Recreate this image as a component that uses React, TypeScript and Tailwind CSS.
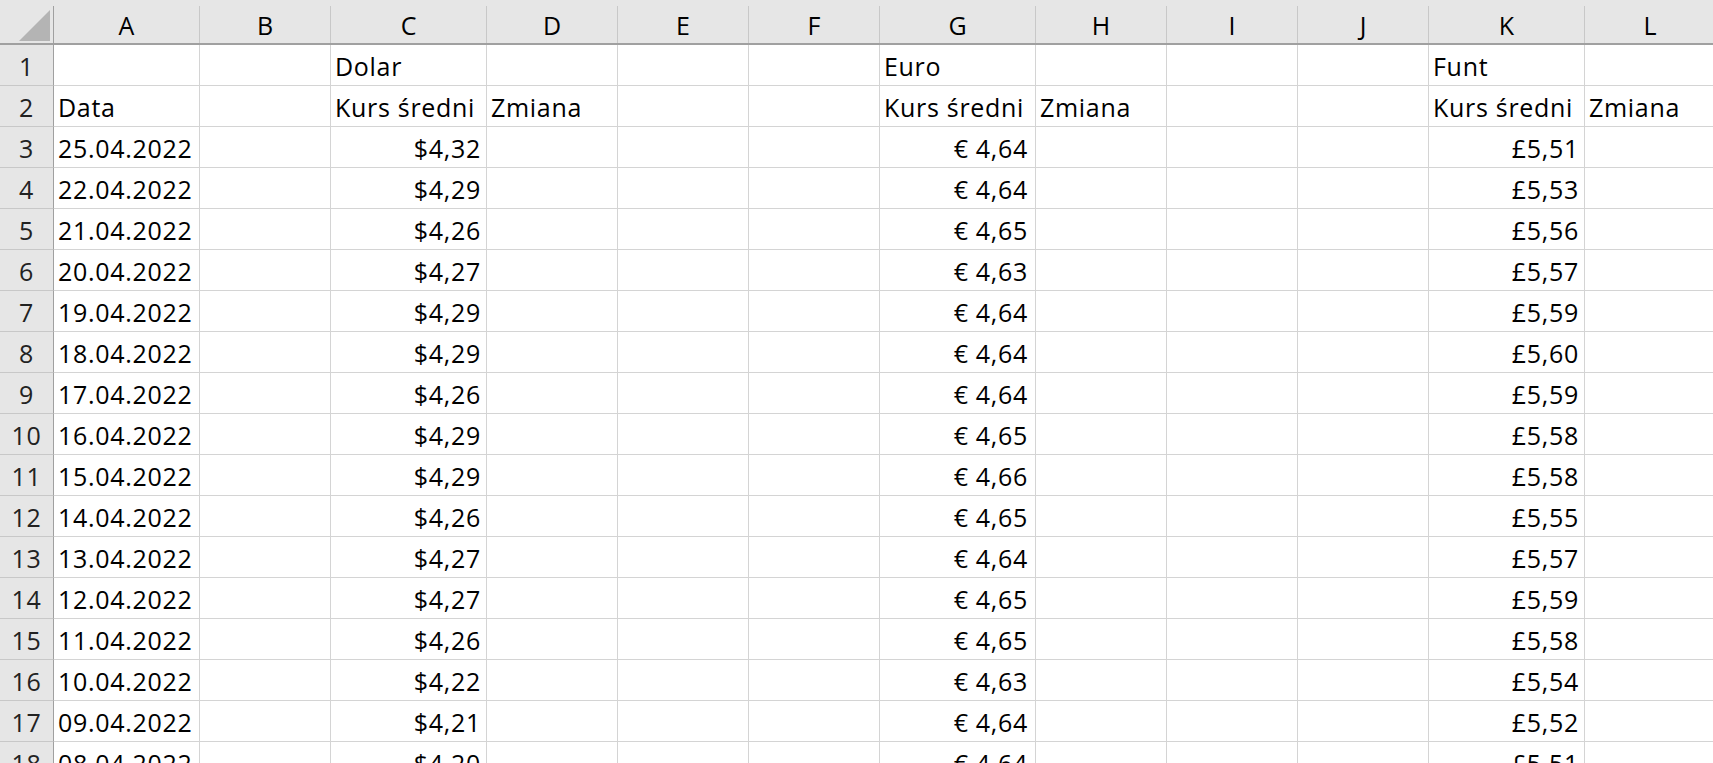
const cols = ["A", "B", "C", "D", "E", "F", "G", "H", "I", "J", "K", "L"];

const widths = [
  "w-[146px]",
  "w-[131px]",
  "w-[156px]",
  "w-[131px]",
  "w-[131px]",
  "w-[131px]",
  "w-[156px]",
  "w-[131px]",
  "w-[131px]",
  "w-[131px]",
  "w-[156px]",
  "w-[131px]",
];

type Cell = { text: string; right?: boolean; pr?: string };

const rates: [string, string, string, string][] = [
  ["25.04.2022", "$4,32", "€ 4,64", "£5,51"],
  ["22.04.2022", "$4,29", "€ 4,64", "£5,53"],
  ["21.04.2022", "$4,26", "€ 4,65", "£5,56"],
  ["20.04.2022", "$4,27", "€ 4,63", "£5,57"],
  ["19.04.2022", "$4,29", "€ 4,64", "£5,59"],
  ["18.04.2022", "$4,29", "€ 4,64", "£5,60"],
  ["17.04.2022", "$4,26", "€ 4,64", "£5,59"],
  ["16.04.2022", "$4,29", "€ 4,65", "£5,58"],
  ["15.04.2022", "$4,29", "€ 4,66", "£5,58"],
  ["14.04.2022", "$4,26", "€ 4,65", "£5,55"],
  ["13.04.2022", "$4,27", "€ 4,64", "£5,57"],
  ["12.04.2022", "$4,27", "€ 4,65", "£5,59"],
  ["11.04.2022", "$4,26", "€ 4,65", "£5,58"],
  ["10.04.2022", "$4,22", "€ 4,63", "£5,54"],
  ["09.04.2022", "$4,21", "€ 4,64", "£5,52"],
  ["08.04.2022", "$4,20", "€ 4,64", "£5,51"],
];

function buildRows(): Cell[][] {
  const empty = (): Cell[] => cols.map(() => ({ text: "" }));
  const r1 = empty();
  r1[2] = { text: "Dolar" };
  r1[6] = { text: "Euro" };
  r1[10] = { text: "Funt" };
  const r2 = empty();
  r2[0] = { text: "Data" };
  r2[2] = { text: "Kurs średni" };
  r2[3] = { text: "Zmiana" };
  r2[6] = { text: "Kurs średni" };
  r2[7] = { text: "Zmiana" };
  r2[10] = { text: "Kurs średni" };
  r2[11] = { text: "Zmiana" };
  const rest = rates.map(([d, usd, eur, gbp]) => {
    const r = empty();
    r[0] = { text: d };
    r[2] = { text: usd, right: true };
    r[6] = { text: eur, right: true, pr: "pr-[7px]" };
    r[10] = { text: gbp, right: true };
    return r;
  });
  return [r1, r2, ...rest];
}

function HeaderCell({ label, w }: { label: string; w: string }) {
  return (
    <div className={`flex shrink-0 ${w} h-[43px]`}>
      <div className="flex flex-1 items-end justify-center pb-[3px] leading-[30px]">
        {label}
      </div>
      <div className="w-px h-[37px] self-end bg-[#c8c8c8]" />
    </div>
  );
}

function DataCell({ cell, w }: { cell: Cell; w: string }) {
  return (
    <div
      className={`flex shrink-0 ${w} h-[41px] border-r border-b border-[#d4d4d4] items-end pb-[4px] leading-[30px] whitespace-nowrap tracking-[0.7px] ${
        cell.right ? `justify-end ${cell.pr ?? "pr-[5px]"}` : "pl-[4px]"
      }`}
    >
      {cell.text}
    </div>
  );
}

export default function App() {
  const rows = buildRows();
  return (
    <div className="h-[763px] w-full overflow-hidden bg-white text-[25px] font-medium text-black [font-family:'Open_Sans',sans-serif]">
      <div className="flex bg-[#e6e6e6] border-b-2 border-[#a0a0a0] w-max">
        <div className="flex shrink-0 w-[53px] h-[43px] items-end justify-end pr-[3px] pb-[2px]">
          <svg width="31" height="31" viewBox="0 0 31 31">
            <polygon points="0,31 31,31 31,0" fill="#b4b4b4" />
          </svg>
        </div>
        <div className="w-px h-[37px] self-end bg-[#a0a0a0]" />
        {cols.map((c, i) => (
          <HeaderCell key={c} label={c} w={widths[i]} />
        ))}
      </div>
      {rows.map((row, ri) => (
        <div key={ri} className="flex w-max">
          <div className="flex shrink-0 w-[54px] h-[41px] bg-[#e6e6e6] border-r border-r-[#a0a0a0] border-b border-b-[#c8c8c8] items-end justify-center pb-[4px] leading-[30px] text-[#222] tracking-[0.6px]">
            {ri + 1}
          </div>
          {row.map((cell, ci) => (
            <DataCell key={ci} cell={cell} w={widths[ci]} />
          ))}
        </div>
      ))}
    </div>
  );
}
